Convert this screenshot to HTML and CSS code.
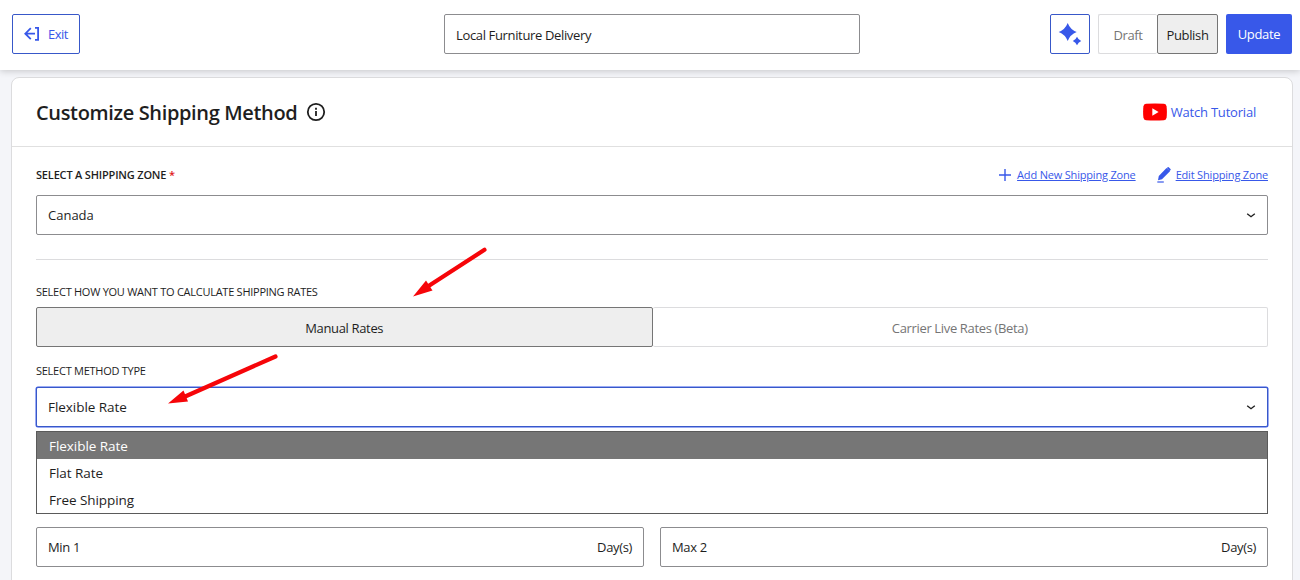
FILE: index.html
```html
<!doctype html>
<html lang="en">
<head>
    <meta charset="UTF-8" />
    <meta name="viewport" content="width=device-width, initial-scale=1.0" />
    <title>Customize Shipping Method</title>
    <link rel="stylesheet" href="styles.css">
</head>
<body>

    <header class="topbar">
        <a class="exit" href="#">
            <svg width="16" height="16" viewBox="0 0 16 16" fill="none" stroke="currentColor" stroke-width="1.8">
                <path d="M6.8 2.2 1.3 7.7l5.5 5.5M1.5 7.7H11M11 1.9h3.1v12H11" />
            </svg>
            <span>Exit</span>
        </a>
        <div class="field title-field">Local Furniture Delivery</div>
        <div class="actions">
            <button class="ai" aria-label="Generate">
                <svg width="24" height="24" viewBox="0 0 24 24" fill="currentColor">
                    <path d="M9.700 1Q12.200 7.500 18.700 10Q12.200 12.500 9.700 19Q7.200 12.500.7 10Q7.200 7.500 9.700 1Z" />
                    <path d="M19 14.800Q20.200 17.800 23.200 19Q20.200 20.200 19 23.200Q17.800 20.200 14.800 19Q17.800 17.800 19 14.800Z" />
                </svg>
            </button>
            <div class="toggle status">
                <div class="option">Draft</div>
                <div class="option active">Publish</div>
            </div>
            <button class="update">Update</button>
        </div>
    </header>

    <main class="card">
        <div class="card-header">
            <h1>Customize Shipping Method</h1>
            <svg class="info" width="20" height="20" viewBox="0 0 20 20" fill="none" stroke="currentColor" stroke-width="1.8">
                <circle cx="10" cy="10" r="8.200" />
                <path d="M10 9v5M10 5.800v1.900" />
            </svg>
            <a class="tutorial" href="#">
                <svg width="24" height="18" viewBox="0 0 24 18">
                    <path fill="#f00" d="M3 .8Q12 .2 21 .8Q23.300 1 23.600 3.500Q24.200 9 23.600 14.500Q23.300 17 21 17.200Q12 17.800 3 17.200Q.7 17 .4 14.500Q-.2 9 .4 3.500Q.7 1 3 .8Z" />
                    <path fill="#fff" d="M9.300 5.200v7.600L15.600 9z" />
                </svg>
                <span>Watch Tutorial</span>
            </a>
        </div>

        <div class="card-body">
            <div class="zone-row">
                <label class="strong">SELECT A SHIPPING ZONE <span class="required">*</span></label>
                <div class="links">
                    <a href="#">
                        <svg width="12" height="12" viewBox="0 0 12 12" stroke="currentColor" stroke-width="1.400"><path d="M6 0v12M0 6h12" /></svg>
                        <span>Add New Shipping Zone</span>
                    </a>
                    <a class="edit" href="#">
                        <svg width="14" height="16" viewBox="0 0 14 16" fill="currentColor">
                            <path d="M1.800 9 9.500 1 13 4.300 5 12.300 1 13.200ZM9.900.9 10.700.2Q11.200-.2 11.700.3L13.500 2Q14 2.500 13.500 3.100L12.800 3.900Z" />
                            <path d="M.3 14.400h6.500v1.200H.3z" />
                        </svg>
                        <span>Edit Shipping Zone</span>
                    </a>
                </div>
            </div>
            <div class="field select">
                <span class="country">Canada</span>
                <svg width="10" height="6" viewBox="0 0 10 6" fill="none" stroke="currentColor" stroke-width="1.400"><path d="M1.200 1.700 5 4.700 8.800 1.700" /></svg>
            </div>

            <hr>

            <label>SELECT HOW YOU WANT TO CALCULATE SHIPPING RATES</label>
            <div class="toggle rates">
                <div class="option active">Manual Rates</div>
                <div class="option">Carrier Live Rates (Beta)</div>
            </div>

            <label class="method-label">SELECT METHOD TYPE</label>
            <div class="method">
                <div class="field select focused">
                    <span>Flexible Rate</span>
                    <svg width="10" height="6" viewBox="0 0 10 6" fill="none" stroke="currentColor" stroke-width="1.400"><path d="M1.200 1.700 5 4.700 8.800 1.700" /></svg>
                </div>
                <ul class="dropdown">
                    <li class="selected">Flexible Rate</li>
                    <li>Flat Rate</li>
                    <li>Free Shipping</li>
                </ul>
            </div>

            <div class="days">
                <div class="field"><span>Min 1</span><span>Day(s)</span></div>
                <div class="field"><span>Max 2</span><span>Day(s)</span></div>
            </div>
        </div>
    </main>

    <!-- pointer arrows over the form -->
    <svg class="arrows" width="1300" height="580" viewBox="0 0 1300 580">
        <g stroke="#f60509" stroke-width="4.200" stroke-linecap="round">
            <path d="M484.500 249.800 427 287" />
            <path d="M275.500 356.500 184 397" />
        </g>
        <g fill="#f60509">
            <path d="M413 296.500 426 280.500 432.500 290.500Z" />
            <path d="M168 403.500 183.500 390.500 188 401.500Z" />
        </g>
    </svg>

</body>
</html>
```
FILE: styles.css
```css
* {
    box-sizing: border-box;
}
body {
    margin: 0;
    height: 580px;
    overflow: hidden;
    background: #f4f5f9;
    color: #1e1e1e;
    font-family: "Open Sans", "Noto Sans", sans-serif;
    font-size: 13px;
    letter-spacing: -0.35px;
}
a {
    color: #3858e9;
    text-decoration: none;
}
svg {
    flex: none;
}
button {
    font: inherit;
    letter-spacing: inherit;
    padding: 0;
    border-radius: 2px;
}
.topbar {
    position: relative;
    height: 70px;
    padding: 0 8px 2px 12px;
    display: grid;
    grid-template-columns: 1fr 416px 1fr;
    align-items: center;
    background: #fff;
    box-shadow: 0 1px 7px rgba(0, 0, 0, 0.2);
}
.exit {
    width: 68px;
    height: 40px;
    display: flex;
    align-items: center;
    gap: 8px;
    padding-left: 11px;
    border: 1px solid #3858c9;
    border-radius: 2px;
    letter-spacing: -0.5px;
}
.field {
    height: 40px;
    display: flex;
    align-items: center;
    justify-content: space-between;
    padding: 0 11px;
    background: #fff;
    border: 1px solid #8c8c8f;
    border-radius: 2px;
}
.title-field {
    padding-top: 2px;
}
.actions {
    display: flex;
    justify-content: flex-end;
    gap: 8px;
}
.ai {
    width: 40px;
    height: 40px;
    display: flex;
    align-items: center;
    justify-content: center;
    background: #fff;
    color: #3858e9;
    border: 1px solid #3858c9;
}
.update {
    width: 66px;
    background: #3858e9;
    color: #fff;
    border: none;
    font-weight: 500;
    letter-spacing: -0.3px;
}
.toggle {
    height: 40px;
    display: flex;
}
.option {
    flex: 1;
    display: flex;
    align-items: center;
    justify-content: center;
    padding-top: 2px;
    background: #fff;
    color: #757575;
    border: 1px solid #dcdcde;
    border-radius: 2px;
}
.option:first-child {
    border-right: none;
}
.option:last-child {
    border-left: none;
}
.toggle .active {
    background: #eee;
    color: #1e1e1e;
    border: 1px solid #757575;
}
.status {
    width: 120px;
}
.status .active {
    flex: none;
    width: 61px;
}
.card {
    height: 520px;
    margin: 7px 7px 0 11px;
    background: #fff;
    border: 1px solid #dcdcde;
    border-radius: 8px;
}
.card-header {
    height: 69px;
    display: flex;
    align-items: center;
    padding: 0 36px 0 24px;
    border-bottom: 1px solid #e0e0e0;
}
h1 {
    margin: 0;
    font-size: 20px;
    font-weight: 600;
    letter-spacing: -0.35px;
}
.info {
    margin-left: 9px;
}
.tutorial {
    margin-left: auto;
    display: flex;
    align-items: center;
    gap: 4px;
    font-weight: 500;
    letter-spacing: -0.2px;
}
.card-body {
    padding: 20px 24px;
}
.zone-row {
    height: 16px;
    margin-bottom: 12px;
    display: flex;
    align-items: center;
    justify-content: space-between;
}
label {
    display: block;
    font-size: 11px;
    line-height: 16px;
    letter-spacing: -0.26px;
}
.strong {
    font-weight: 600;
    letter-spacing: -0.18px;
}
.required {
    color: #e02020;
}
.links {
    display: flex;
    gap: 21px;
    font-size: 11px;
    line-height: 14px;
    letter-spacing: -0.18px;
}
.links a {
    display: flex;
    align-items: center;
    gap: 6px;
}
.links .edit {
    gap: 5px;
}
.links span {
    margin-top: -1px;
    text-decoration: underline;
}
hr {
    height: 1px;
    margin: 24px 0;
    border: none;
    background: #dcdcde;
}
.rates {
    margin-top: 7px;
}
.method-label {
    margin: 16px 0 8px;
}
.method {
    position: relative;
    font-size: 13.5px;
    letter-spacing: -0.05px;
}
.country {
    letter-spacing: 0;
}
.focused {
    border-color: #3858c9;
    box-shadow: 0 0 0 0.5px #3858e9;
}
.dropdown {
    position: absolute;
    top: 44px;
    left: 0;
    right: 0;
    margin: 0;
    padding: 0;
    list-style: none;
    background: #fff;
    border: 1px solid #5a5a5a;
}
.dropdown li {
    height: 27px;
    padding-left: 12px;
    line-height: 29px;
}
.dropdown .selected {
    background: #767676;
    color: #fff;
}
.days {
    margin-top: 100px;
    display: grid;
    grid-template-columns: 1fr 1fr;
    gap: 16px;
}
.arrows {
    position: absolute;
    top: 0;
    left: 0;
    pointer-events: none;
}
```
